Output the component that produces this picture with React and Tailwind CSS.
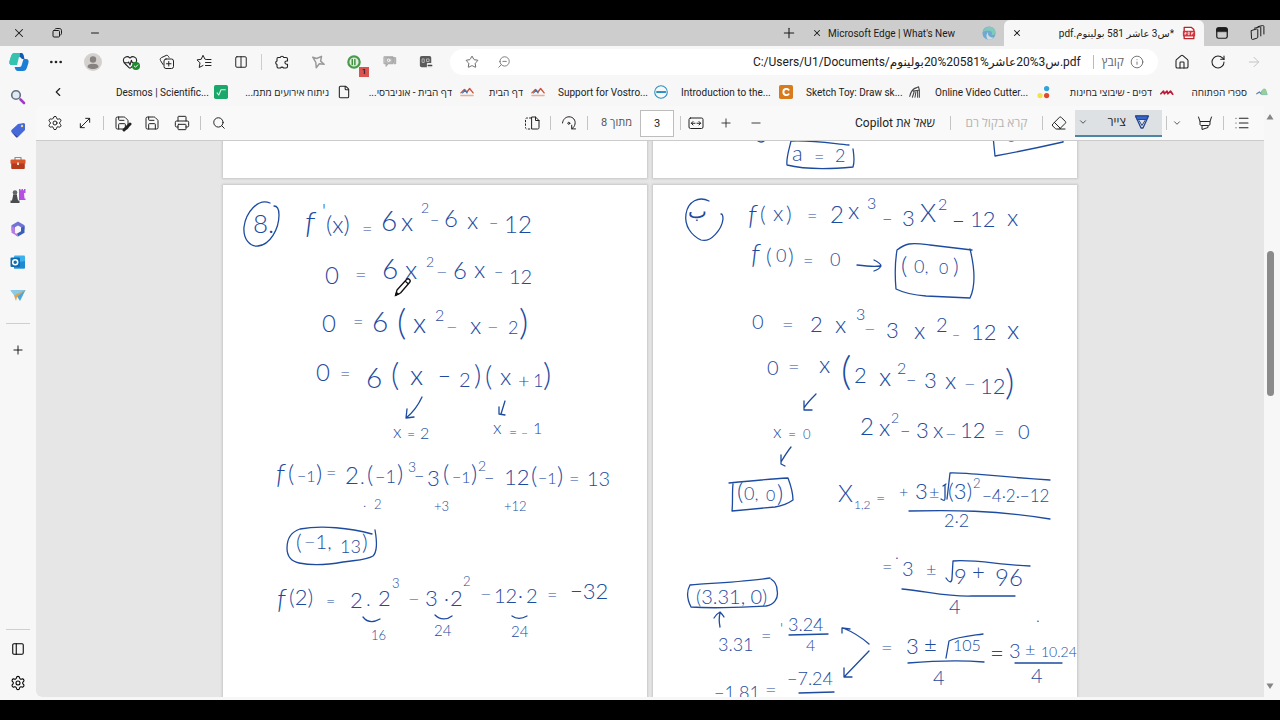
import {
  ArrowLeft, ChevronDown, ChevronLeft, Columns2, Ellipsis, Eraser, File, HeartPulse, House, Info,
  List, Minus, MoveDiagonal, PanelLeft, Plus, Printer, RotateCw, Save, Search, Settings, Star, X, ZoomOut,
} from 'lucide-react'

const UI_FONT = "font-['Roboto','Open_Sans','Noto_Sans','DejaVu_Sans',sans-serif]"

function Glyph({ className = 'size-4', children, box = '0 0 16 16' }) {
  return (
    <svg viewBox={box} className={className} fill="none" stroke="currentColor" strokeLinecap="round" strokeLinejoin="round" aria-hidden="true">
      {children}
    </svg>
  )
}

function IconButton({ label, className = 'w-9', children }) {
  return (
    <button type="button" aria-label={label} className={`flex shrink-0 items-center justify-center ${className}`}>
      {children}
    </button>
  )
}

/* ---- Small drawings ---- */

const CopilotLogo = () => (
  <Glyph className="size-5" box="0 0 20 20">
    <g stroke="none">
      <path d="M6 1h6c2 0 2.300 1.500 3 4H9.500C8 5 7.500 6 7 8l-1.500 5H3C.5 13 0 11 .6 9L2 4.500C2.700 2 4 1 6 1z" fill="#20a8c9" />
      <path d="M6 1h5L8 13H3C.5 13 0 11 .6 9L2 4.500C2.700 2 4 1 6 1z" fill="#35c3b0" />
      <path d="M14 19H9c-2 0-2.700-1.500-3.400-4h4.900c1.500 0 2-1 2.500-3l1.500-5H17c2.500 0 3 2 2.400 4L18 15.500c-.7 2.500-2 3.500-4 3.500z" fill="#1b7fd6" />
      <path d="M11 1h1c2 0 2.300 1.500 3 4l.5 2H13l-2-2z" fill="#1559b5" />
    </g>
  </Glyph>
)

const EdgeLogo = () => (
  <Glyph className="size-3.5 opacity-70">
    <g stroke="none">
      <circle cx="8" cy="8" r="7.500" fill="#4a9ad0" />
      <path d="M1 7c1-4 4-6.500 8-6.200 4 .3 6.700 3.200 6.500 6.200-.2 2.500-2.500 3.600-4.500 3.200 1-1.700.5-4.200-2.500-4.700C5.500 5 2.500 5.500 1 7z" fill="#62c9b4" />
      <path d="M7 7c-1 3 1 6 6 6-1.500 2-4 2.700-6 2.400C5 14 4 9 7 7z" fill="#cfe2ee" />
    </g>
  </Glyph>
)

const PdfBadge = () => (
  <Glyph className="size-3.5">
    <path d="M2.500 6V1.500h8L13.500 4v2M2.500 12v2.500h11V12" stroke="#b3262b" strokeWidth="1.500" fill="#fff" />
    <rect x="1" y="5.500" width="14" height="6.500" rx="1" fill="#d3333b" stroke="none" />
    <path d="M3.500 10V7.500h1.300v1.200H3.500M7 7.500V10h1.300V7.500zM11 10V7.500h1.800M11 8.700h1.300" stroke="#fff" strokeWidth=".8" />
  </Glyph>
)

const Restore = () => (
  <Glyph className="size-2.5" box="0 0 10 10">
    <rect x="1" y="2.500" width="6.500" height="6.500" rx="1" />
    <path d="M3 1.200c.3-.5.700-.7 1.200-.7h3C8.700.5 9.500 1.300 9.500 2.700v3c0 .6-.3 1-.8 1.200" />
  </Glyph>
)

const Collections = () => (
  <Glyph className="size-4">
    <path d="M4 10.500 1.500 6.500c-.7-1.200-.2-2.200 1-2.900L7 1.500c1-.5 2 0 2.500 1l.5.900" />
    <rect x="5" y="5" width="9.500" height="9.500" rx="2" />
    <path d="M9.750 7.500v4.500M7.500 9.750H12" />
  </Glyph>
)

const Favorites = () => (
  <Glyph className="size-4">
    <path d="M9.500 5.300H9L7 1.300 5.200 5.300 1 5.900l3 3-.8 4.600L7 11.500" />
    <path d="M10.500 5.500H15M9.500 8.500H15M9.500 11.500H15" />
  </Glyph>
)

const Extensions = () => (
  <Glyph className="size-4">
    <path d="M4 3.500h2.200a1.900 1.900 0 0 1 3.600 0H12c.8 0 1.500.7 1.500 1.500v2h-1a1.600 1.600 0 0 0 0 3.200h1V12.500c0 .8-.7 1.500-1.500 1.500H9.500a1.700 1.700 0 0 0-3 0H4.500c-.8 0-1.500-.7-1.500-1.500v-2a1.900 1.900 0 0 1 0-3.600V5c0-.8.300-1.500 1-1.500z" strokeWidth="1.100" />
  </Glyph>
)

const Workspaces = () => (
  <Glyph className="size-4">
    <path d="M1.500 5.500 6.500 4c.8-.2 1.300.2 1.300 1v7c0 .6-.3 1-.9 1.200l-4 1.200c-.8.2-1.400-.2-1.400-1z" />
    <path d="M4.500 3.200 9.500 1.900c.8-.2 1.300.2 1.300 1v8M8 1.600l4.500-1c.8-.2 1.400.2 1.400 1V9" />
  </Glyph>
)

const TabActions = () => (
  <Glyph className="size-3.5">
    <rect x="2" y="2" width="12" height="12" rx="2" strokeWidth="1.400" />
    <path d="M2 6V4c0-1.200.8-2 2-2h8c1.200 0 2 .8 2 2v2z" fill="currentColor" />
  </Glyph>
)

const Highlighter = () => (
  <Glyph className="size-4">
    <path d="M1.500 2l1.500 4.500h10L14.500 2M3 6.500v2.500c0 1 .5 1.500 1.500 1.500h7c1 0 1.500-.5 1.500-1.500V6.500M5 10.500v4l6-2v-2" />
  </Glyph>
)

const DrawPen = () => (
  <Glyph className="size-4">
    <path d="M1.500 2h13L9 14H7z" stroke="#26468f" strokeWidth="1.300" />
    <path d="M2 2h12l-1.500 3.500h-9z" fill="#3566cf" stroke="#26468f" />
    <path d="M5 6.500l3 5 3-5" stroke="#26468f" />
  </Glyph>
)

const FitWidth = () => (
  <Glyph className="size-4">
    <rect x="1" y="3" width="14" height="10.500" rx="1.500" />
    <path d="M3.500 8.250H7M9 8.250h3.500M5 6.500 3.300 8.250 5 10M11 6.500l1.700 1.750L11 10" />
  </Glyph>
)

const Rotate = () => (
  <Glyph className="size-4">
    <path d="M1.500 8C2 4 5 1.800 8 1.800c4.200 0 6.800 3.500 6 7.200-.3 2-1.500 3.500-3 4.700M10.700 10.200v3.700h3.800" />
    <circle cx="7.800" cy="8.300" r="1" />
  </Glyph>
)

const PageView = () => (
  <Glyph className="size-4">
    <path d="M7 3H3C2 3 1.500 3.500 1.500 4.500v8c0 1 .5 1.500 1.500 1.500h4" strokeDasharray="1.500 2" />
    <path d="M8 2h3.500L15 5.500v7c0 1-.5 1.500-1.500 1.500H8zM11.500 2v3.500H15" />
  </Glyph>
)

const SaveAs = () => (
  <span className="relative">
    <Save className="size-4" strokeWidth={1.5} />
    <Glyph className="absolute -right-0.5 -bottom-px size-2.5" box="0 0 10 10">
      <path d="M2 8l6-6" stroke="#222" strokeWidth="3" />
    </Glyph>
  </span>
)

/* ---- Sidebar apps ---- */

const SIDEBAR = [
  { label: 'חיפוש', art: (
    <><circle cx="6" cy="6" r="4.300" fill="#dcebf5" stroke="#65707c" strokeWidth="1.600" /><path d="M10.500 10.500l3.500 3.500" stroke="#a13bc4" strokeWidth="2.600" /></>
  ) },
  { label: 'קניות', art: (
    <g stroke="none"><path d="M8 2l6-1 1 1v6l-7 7c-1 .5-1.500.5-2 0L1.500 10c-.5-.7-.5-1.200 0-2z" fill="#4668d8" /><path d="M1.500 10L8 15c-1 .5-1.500.5-2 0z" fill="#2f3f9b" /><circle cx="12" cy="4" r="1.200" fill="#f5d67a" /></g>
  ) },
  { label: 'כלים', art: (
    <g stroke="none"><path d="M5 5V2.500h6V5" stroke="#8a8f94" strokeWidth="1.200" /><rect x=".5" y="4.500" width="15" height="4.500" rx="1" fill="#d9552a" /><rect x="1.200" y="8.500" width="13.600" height="5.500" rx="1" fill="#b43c1c" /><rect x="7" y="7.500" width="2" height="2.500" fill="#f3d9c9" /></g>
  ) },
  { label: 'משחקים', art: (
    <g stroke="none"><path d="M9 1h1.500v1.200h1V1H13v1.200h1V1h1.500v4H14l.5 5.500h1V12H9V5z" fill="#b44fdf" /><circle cx="5" cy="4.500" r="2.300" fill="#63676b" /><path d="M3 6.500h4V8l1 4.500h1.500V15H.5v-2.500H2L3 8z" fill="#4a4d50" /></g>
  ) },
  { label: 'Microsoft 365', art: (
    <g stroke="none"><path d="M8 .5l6.500 3.700v4L11 10V6.300L8 4.600 5 6.300v5.200L1.500 9.500V4.300z" fill="#6f73d8" /><path d="M14.500 5v6.700L8 15.500l-3-1.700 6-3.500V7z" fill="#3b5fb8" /><path d="M1.500 5L5 7v5l3 1.500v2l-6.500-3.800z" fill="#b77de0" /><circle cx="8" cy="8" r="2.300" fill="#f7f7f7" /></g>
  ) },
  { label: 'Outlook', art: (
    <g stroke="none"><rect x="4" y="1.500" width="11" height="13" rx="1" fill="#3cb0ea" /><path d="M4 9l11-2v6.500c0 .6-.4 1-1 1H4z" fill="#1f8ad2" /><rect x=".5" y="3.500" width="9.500" height="9.500" rx="1" fill="#0f6cb0" /><circle cx="5.200" cy="8.200" r="2.500" stroke="#fff" strokeWidth="1.500" /></g>
  ) },
  { label: 'Drop', art: (
    <g stroke="none"><path d="M.5 3.500L15.500 3 10 14 7.500 10z" fill="#4aa6dc" /><path d="M.5 3.500L15.500 3 4.500 9z" fill="#8ccbe8" /><path d="M4 8.500L15.500 3 7 10l-1 4z" fill="#e0a44a" /></g>
  ) },
]

function Sidebar() {
  return (
    <nav aria-label="סרגל צד" className="flex w-9 shrink-0 flex-col items-center">
      <div className="flex flex-col pt-0.5">
        {SIDEBAR.map(({ label, art }) => (
          <IconButton key={label} label={label} className="h-[33px] w-9">
            <Glyph className="size-4">{art}</Glyph>
          </IconButton>
        ))}
      </div>
      <hr className="mt-3 w-6 border-[#cfcfcf]" />
      <IconButton label="הוספה" className="mt-3 h-7 w-9"><Plus className="size-3.5" strokeWidth={1.5} /></IconButton>
      <div className="mt-auto flex flex-col items-center">
        <hr className="w-6 border-[#cfcfcf]" />
        <IconButton label="הצמדה" className="mt-0.5 h-[33px] w-9"><PanelLeft className="size-3.5" strokeWidth={1.8} /></IconButton>
        <IconButton label="הגדרות" className="h-[35px] w-9"><Settings className="size-4" strokeWidth={1.6} /></IconButton>
      </div>
    </nav>
  )
}

/* ---- Browser chrome ---- */

function TitleBar() {
  return (
    <header className="flex h-[26px] shrink-0 items-stretch bg-[#cdcdcd] pr-1 text-[10px] text-[#1b1b1b]">
      <IconButton label="סביבות עבודה"><Workspaces /></IconButton>
      <IconButton label="כרטיסיות"><TabActions /></IconButton>
      <div className="flex w-[200px] items-center gap-2 rounded-t-md bg-[#f7f7f7] pr-2 pl-2">
        <PdfBadge />
        <span className="min-w-0 flex-1 truncate">*س3 عاشر 581 بولينوم.pdf</span>
        <IconButton label="סגור כרטיסייה" className="w-2.5"><X className="size-2.5" strokeWidth={2.5} /></IconButton>
      </div>
      <div className="flex w-[200px] items-center gap-1.5 pr-2 pl-2">
        <EdgeLogo />
        <span dir="ltr" className="min-w-0 flex-1 truncate">Microsoft Edge | What's New</span>
        <IconButton label="סגור כרטיסייה" className="w-2.5"><X className="size-2.5" strokeWidth={2.5} /></IconButton>
      </div>
      <IconButton label="כרטיסייה חדשה" className="w-[30px]"><Plus className="size-4" strokeWidth={1.6} /></IconButton>
      <div className="flex-1" />
      <IconButton label="מזער" className="w-[38px]"><Minus className="size-3" strokeWidth={2} /></IconButton>
      <IconButton label="שחזר" className="w-[38px]"><Restore /></IconButton>
      <IconButton label="סגור" className="w-[38px]"><X className="size-3.5" strokeWidth={1.8} /></IconButton>
    </header>
  )
}

function AddressRow() {
  return (
    <div className="flex h-8 shrink-0 items-stretch pr-2 text-[#222]">
      <IconButton label="קדימה"><ArrowLeft className="size-4 -scale-x-100 text-[#c4c4c4]" strokeWidth={1.5} /></IconButton>
      <IconButton label="רענן"><RotateCw className="size-4" strokeWidth={1.6} /></IconButton>
      <IconButton label="דף הבית"><House className="size-4" strokeWidth={1.6} /></IconButton>
      <div className="mx-1.5 my-[3px] flex min-w-0 flex-1 items-center rounded-full bg-white pr-3.5 pl-3">
        <Info className="size-3.5 text-[#666]" strokeWidth={1.5} />
        <label htmlFor="url" className="mr-1.5 text-xs text-[#666]">קובץ</label>
        <span className="mr-2 ml-3 h-3.5 w-px bg-[#bbb]" />
        <input id="url" dir="ltr" className="min-w-0 flex-1 bg-transparent text-right text-xs text-[#1b1b1b] outline-none" defaultValue="C:/Users/U1/Documents/س3%20عاشر%20581%20بولينوم.pdf" />
        <IconButton label="הקטנה" className="w-5"><ZoomOut className="size-3.5 -scale-x-100 text-[#777]" strokeWidth={1.6} /></IconButton>
        <IconButton label="הוסף למועדפים" className="mr-3 w-5"><Star className="size-3.5 text-[#555]" strokeWidth={1.5} /></IconButton>
      </div>
      <IconButton label="הרחבת הקלטה">
        <Glyph className="size-3.5 opacity-90">
          <g stroke="none"><rect x="1" y="1" width="13" height="13" rx="2" fill="#4a4a4a" /><path d="M4 4.500h2v4H4zM9 4.500h2.500v3H9z" stroke="#b5b5b5" /><rect x="9" y="9" width="7" height="6" rx="1" fill="#f0f0f0" /><path d="M10.500 12h4" stroke="#333" strokeWidth="1.500" /></g>
        </Glyph>
      </IconButton>
      <IconButton label="הרחבת צ'אט">
        <Glyph className="size-3.5"><path d="M5 3h9.500v7H13M1.500 2h10v8H6l-2.500 3v-3h-2z" fill="#b5b5b5" stroke="#a3a3a3" /><circle cx="6.500" cy="6" r="1.500" stroke="#fff" /></Glyph>
      </IconButton>
      <IconButton label="הרחבה ירוקה">
        <span className="relative">
          <Glyph className="size-3.5"><circle cx="8" cy="8" r="6.500" stroke="#4a9a4c" strokeWidth="2.500" fill="#dff0df" /><path d="M6 5v6M9 5v6" stroke="#3c8a3e" strokeWidth="1.600" /></Glyph>
          <span className="absolute -right-2 -bottom-2 flex size-2.5 items-center justify-center bg-[#d9534f] text-[8px] leading-none text-black">1</span>
        </span>
      </IconButton>
      <IconButton label="הרחבת כוכב">
        <Glyph className="size-3.5"><path d="M2 2.500l4.500 1.500L12 1.500 11 7l4 3.500-5.500-.5L6 14.500 5.500 8.500z" stroke="#9a9a9a" strokeWidth="1.700" /></Glyph>
      </IconButton>
      <IconButton label="הרחבות"><Extensions /></IconButton>
      <span className="mx-0.5 h-4 w-px self-center bg-[#ccc]" />
      <IconButton label="מסך מפוצל" className="w-[37px]"><Columns2 className="size-3.5" strokeWidth={1.7} /></IconButton>
      <IconButton label="מועדפים" className="w-[37px]"><Favorites /></IconButton>
      <IconButton label="אוספים" className="w-[37px]"><Collections /></IconButton>
      <IconButton label="ביצועים" className="w-[37px]">
        <span className="relative">
          <HeartPulse className="size-4" strokeWidth={1.6} />
          <Glyph className="absolute -right-0.5 bottom-0 size-2" box="0 0 8 8"><circle cx="4" cy="4" r="4" fill="#1d8a2c" stroke="none" /><path d="M2.300 4l1.200 1.200 2.200-2.300" stroke="#fff" /></Glyph>
        </span>
      </IconButton>
      <IconButton label="פרופיל" className="w-[37px]">
        <Glyph className="size-[18px]" box="0 0 18 18"><g stroke="none"><circle cx="9" cy="9" r="9" fill="#d4d0cd" /><circle cx="9" cy="6.500" r="3.200" fill="#86827f" /><path d="M3.500 14c0-2.500 2-3.200 5.500-3.200s5.500.7 5.500 3.200c-3 2.700-8 2.700-11 0z" fill="#86827f" /></g></Glyph>
      </IconButton>
      <IconButton label="עוד" className="w-[37px]"><Ellipsis className="size-4" strokeWidth={2} /></IconButton>
      <IconButton label="Copilot" className="w-[37px]"><CopilotLogo /></IconButton>
    </div>
  )
}

const HomeIcon = (
  <><path d="M1 9l4-4 3 3 3-4 4 5" stroke="#c9503a" strokeWidth="1.500" /><path d="M3 9l3-3 2 3" stroke="#3a78b5" strokeWidth="1.500" /><path d="M1 12h14" stroke="#e8b08e" strokeWidth="1.500" /></>
)

const BOOKMARKS = [
  { id: 'books', text: 'ספרי הפתוחה', width: 'w-[60px]', rtl: true, icon: (
    <><path d="M2 10l3-2 2 2 1-2" stroke="#5b88a8" strokeWidth="1.500" /><path d="M7 9c1-4 3-5 5-4l2 6H8z" fill="#9fd08a" stroke="#7fc0b0" /></>
  ) },
  { id: 'pages', text: 'דפים - שיבוצי בחינות', width: 'w-[88px]', rtl: true, icon: <path d="M1 10l3-3 1 3 3-3 1 3 3-3 2.500 3.500" stroke="#b8203a" strokeWidth="2" /> },
  { id: 'video', text: 'Online Video Cutter...', width: 'w-[94px]', icon: (
    <g stroke="none"><circle cx="11" cy="4" r="3" fill="#2ea3dc" /><circle cx="11" cy="12" r="3" fill="#e0492f" /><circle cx="3.500" cy="12" r="3" fill="#f3e04a" /></g>
  ) },
  { id: 'sketch', text: 'Sketch Toy: Draw sk...', width: 'w-[94px]', icon: <path d="M2 13c1-5 4-9 8-10l2-1 1 4v8M5 14l2-6M8 14l1-6M11 14V7M6 7l6-1" stroke="#444" strokeWidth="1.200" /> },
  { id: 'intro', text: 'Introduction to the...', width: 'w-[90px]', icon: (
    <><rect width="16" height="16" rx="2" fill="#d97a1c" stroke="none" /><path d="M11 5.500C9.500 3.800 5 4 5 8s4.500 4.200 6 2.500" stroke="#fff" strokeWidth="2.200" /></>
  ) },
  { id: 'dell', text: 'Support for Vostro...', width: 'w-[88px]', icon: (
    <><circle cx="8" cy="8" r="7.200" stroke="#2a8fc0" strokeWidth="1.200" /><path d="M3.500 8h1.500M6.500 8H8M9.500 8h1M12 8h.8" stroke="#2a8fc0" strokeWidth="2.400" /></>
  ) },
  { id: 'home', text: 'דף הבית', width: 'w-9', rtl: true, icon: HomeIcon },
  { id: 'university', text: 'דף הבית - אוניברסי...', width: 'w-[88px]', rtl: true, icon: HomeIcon },
  { id: 'events', text: 'ניתוח אירועים מתמ...', width: 'w-[88px]', rtl: true, icon: null },
  { id: 'desmos', text: 'Desmos | Scientific...', width: 'w-[90px]', icon: (
    <><rect width="16" height="16" rx="2" fill="#19a869" stroke="none" /><path d="M3.500 9l2 2.500L8 5.500h5" stroke="#d6f5e6" strokeWidth="1.200" /></>
  ) },
]

function BookmarksRow() {
  return (
    <div className="flex h-7 shrink-0 items-center pr-[11px] text-[10px] text-[#222]">
      <div className="flex items-center gap-[13px]">
        {BOOKMARKS.map(({ id, text, width, rtl, icon }) => (
          <a key={id} href="#" className="flex items-center gap-2 whitespace-nowrap">
            {icon ? <Glyph className="size-3.5 shrink-0">{icon}</Glyph> : <File className="size-3.5 shrink-0" strokeWidth={1.8} />}
            <span dir={rtl ? 'rtl' : 'ltr'} className={`flex justify-start ${width}`}>{text}</span>
          </a>
        ))}
      </div>
      <IconButton label="מועדפים נוספים" className="mr-auto ml-1 w-9"><ChevronLeft className="size-3.5" strokeWidth={2} /></IconButton>
    </div>
  )
}

/* ---- PDF viewer ---- */

const Divider = () => <span className="h-3.5 w-px shrink-0 bg-[#c4c4c4]" />

function PdfToolbar() {
  return (
    <div className="flex h-[35px] shrink-0 items-center border-b border-[#cbcbcb] bg-[#f9f9f9] pr-1 text-xs text-[#222]">
      <IconButton label="תוכן עניינים"><List className="size-4" strokeWidth={1.6} /></IconButton>
      <Divider />
      <IconButton label="סימון"><Highlighter /></IconButton>
      <IconButton label="אפשרויות סימון" className="w-5"><ChevronDown className="size-2.5" strokeWidth={1.8} /></IconButton>
      <Divider />
      <div className="mr-1 flex h-[27px] w-[87px] items-center border-b-2 border-[#4b87a5] bg-[#dde1e4]">
        <button type="button" className="flex flex-1 items-center gap-2 pr-3"><DrawPen />צייר</button>
        <IconButton label="אפשרויות ציור" className="w-4"><ChevronDown className="size-2.5" strokeWidth={1.8} /></IconButton>
      </div>
      <IconButton label="מחק" className="w-8"><Eraser className="size-4" strokeWidth={1.5} /></IconButton>
      <Divider />
      <button type="button" disabled className="w-[91px] text-center whitespace-nowrap text-[#b4b4b4]">קרא בקול רם</button>
      <Divider />
      <button type="button" className="w-[110px] text-center whitespace-nowrap">שאל את Copilot</button>

      <IconButton label="הקטן" className="mr-[69px] w-[30px]"><Minus className="size-3.5" strokeWidth={1.5} /></IconButton>
      <IconButton label="הגדל" className="w-[30px]"><Plus className="size-3.5" strokeWidth={1.5} /></IconButton>
      <IconButton label="התאם לרוחב" className="w-[30px]"><FitWidth /></IconButton>
      <Divider />
      <input id="page" dir="ltr" aria-label="מספר עמוד" className="mr-1.5 h-[27px] w-[34px] border border-[#bdbdbd] bg-white text-center text-[11px]" defaultValue="3" />
      <label htmlFor="page" className="mx-2 w-9 text-[11px] whitespace-nowrap text-[#555]">מתוך 8</label>
      <Divider />
      <IconButton label="סובב"><Rotate /></IconButton>
      <Divider />
      <IconButton label="תצוגת עמוד"><PageView /></IconButton>

      <div className="mr-auto flex items-center pl-[7px]">
        <IconButton label="חיפוש"><Search className="size-3.5" strokeWidth={1.7} /></IconButton>
        <Divider />
        <IconButton label="הדפס"><Printer className="size-4" strokeWidth={1.5} /></IconButton>
        <IconButton label="שמור" className="w-6"><Save className="size-4" strokeWidth={1.5} /></IconButton>
        <IconButton label="שמור בשם"><SaveAs /></IconButton>
        <Divider />
        <IconButton label="מסך מלא"><MoveDiagonal className="size-4" strokeWidth={1.5} /></IconButton>
        <IconButton label="הגדרות" className="w-6"><Settings className="size-4" strokeWidth={1.5} /></IconButton>
      </div>
    </div>
  )
}

/* Ink notes: [x, baseline, size, text] */
const DERIVATIVE_NOTES = [
  [253, 233, 26, '8.'],
  [305, 234, 32, 'f'], [322, 218, 20, '\''], [326, 233, 24, '(x)'], [362, 235, 18, '='], [381, 231, 28, '6'], [401, 231, 26, 'x'], [421, 213, 14, '2'], [430, 226, 16, '−'],
  [444, 227, 24, '6'], [467, 229, 24, 'x'], [489, 229, 16, '−'], [504, 233, 24, '12'],
  [325, 284, 24, '0'], [355, 282, 20, '='], [382, 279, 28, '6'], [405, 279, 26, 'x'], [426, 267, 14, '2'], [436, 279, 20, '−'],
  [453, 279, 24, '6'], [474, 278, 24, 'x'], [494, 278, 16, '−'], [509, 284, 20, '12'],
  [322, 332, 24, '0'], [353, 328, 18, '='], [372, 332, 28, '6'], [397, 335, 36, '('], [413, 333, 28, 'x'], [435, 321, 16, '2'], [446, 334, 20, '−'],
  [470, 334, 24, 'x'], [487, 334, 20, '−'], [508, 334, 18, '2'], [519, 335, 36, ')'],
  [316, 381, 24, '0'], [340, 380, 18, '='], [366, 388, 28, '6'], [391, 386, 32, '('], [410, 385, 28, 'x'], [438, 384, 22, '−'], [459, 387, 20, '2'],
  [474, 385, 28, ')'], [485, 386, 28, '('], [500, 385, 24, 'x'], [518, 388, 20, '+'], [533, 387, 18, '1'], [543, 386, 32, ')'],
  [393, 438, 18, 'x'], [407, 439, 14, '='], [420, 439, 16, '2'],
  [493, 434, 18, 'x'], [509, 437, 14, '='], [521, 437, 12, '−'], [533, 434, 16, '1'],
  [276, 484, 28, 'f'], [288, 482, 24, '('], [297, 482, 16, '−1'], [316, 482, 24, ')'], [326, 479, 18, '='], [345, 484, 24, '2'], [360, 484, 20, '.'],
  [367, 483, 24, '('], [375, 483, 18, '−1'], [397, 482, 24, ')'], [408, 472, 14, '3'], [414, 482, 18, '−'], [427, 486, 22, '3'],
  [443, 482, 24, '('], [452, 483, 16, '−1'], [471, 482, 24, ')'], [478, 471, 14, '2'], [484, 484, 18, '−'], [504, 485, 22, '12'],
  [531, 484, 24, '('], [538, 484, 16, '−1'], [557, 484, 24, ')'], [569, 485, 18, '='], [587, 486, 20, '13'],
  [363, 507, 14, '.'], [374, 509, 13, '2'], [434, 511, 13, '+3'], [504, 511, 13, '+12'],
  [296, 550, 22, '('], [304, 549, 20, '−1,'], [340, 553, 18, '13'], [362, 550, 22, ')'],
  [277, 609, 28, 'f'], [289, 605, 22, '(2)'], [326, 607, 16, '='], [350, 608, 22, '2'], [366, 606, 20, '.'], [378, 606, 22, '2'], [392, 588, 13, '3'],
  [408, 606, 20, '−'], [425, 606, 22, '3'], [444, 606, 20, '·'], [450, 606, 22, '2'], [463, 586, 13, '2'],
  [480, 601, 20, '−'], [494, 603, 20, '12'], [518, 603, 20, '·'], [526, 603, 20, '2'], [547, 601, 18, '='], [570, 599, 22, '−32'],
  [371, 640, 13, '16'], [434, 636, 15, '24'], [511, 637, 15, '24'],
]

const DERIVATIVE_STROKES = [
  'M270 203C258 198 246 212 244 227c-1 12 6 20 14 19 12-1 21-17 21-31 0-7-2-9-5-9',
  'M422 397C417 408 411 414 406 418M407 409l-1 9 8-1',
  'M505 401l-4 13M499 407l0 7 6 1',
  'M372 534C350 528 322 525 300 529c-9 3-13 10-13 19 0 8 3 13 12 15 14 3 28 2 44-1 14-2 24-2 30-6 4-4 4-15 2-26',
  'M363 617c4 5 10 6 17 2', 'M435 615c5 5 12 5 17 1', 'M512 616c4 3 10 3 15 0',
]

const CUBIC_NOTES = [
  [688, 218, 20, 'ب'],
  [748, 225, 28, 'f'], [760, 222, 22, '('], [773, 221, 22, 'x'], [786, 222, 22, ')'], [807, 222, 18, '='], [830, 223, 24, '2'], [848, 219, 24, 'x'], [867, 209, 16, '3'],
  [882, 225, 18, '−'], [902, 226, 22, '3'], [920, 222, 26, 'X'], [938, 210, 16, '2'], [952, 229, 22, '−'], [970, 227, 22, '12'], [1007, 226, 24, 'x'],
  [751, 264, 28, 'f'], [766, 264, 22, '('], [776, 262, 18, '0'], [788, 264, 22, ')'], [803, 267, 18, '='], [830, 266, 18, '0'],
  [901, 274, 24, '('], [914, 273, 18, '0,'], [939, 274, 16, '0'], [953, 274, 22, ')'],
  [752, 329, 20, '0'], [782, 332, 20, '='], [810, 332, 22, '2'], [835, 333, 24, 'x'], [856, 320, 16, '3'], [864, 336, 20, '−'], [886, 338, 22, '3'],
  [914, 339, 24, 'x'], [936, 332, 20, '2'], [952, 340, 14, '−'], [971, 340, 22, '12'], [1007, 339, 26, 'x'],
  [767, 375, 20, '0'], [788, 374, 20, '='], [819, 373, 24, 'x'], [841, 385, 40, '('], [854, 383, 22, '2'], [879, 386, 26, 'x'], [897, 374, 16, '2'], [906, 386, 18, '−'],
  [924, 388, 22, '3'], [945, 389, 24, 'x'], [964, 391, 20, '−'], [980, 394, 22, '12'], [1005, 395, 36, ')'],
  [773, 438, 18, 'x'], [788, 439, 14, '='], [803, 439, 13, '0'],
  [860, 435, 24, '2'], [879, 436, 24, 'x'], [891, 423, 14, '2'], [900, 437, 18, '−'], [916, 438, 22, '3'], [933, 438, 22, 'x'], [945, 441, 20, '−'],
  [960, 438, 22, '12'], [994, 439, 18, '='], [1018, 439, 20, '0'],
  [737, 500, 24, '('], [744, 500, 18, '0,'], [766, 501, 16, '0'], [777, 502, 24, ')'],
  [838, 502, 24, 'X'], [854, 509, 12, '1,2'], [876, 504, 16, '='], [899, 498, 16, '+'], [915, 499, 22, '3'], [929, 499, 18, '±'], [948, 499, 22, '(3)'], [973, 488, 13, '2'],
  [982, 502, 17, '−4·2·−12'], [944, 527, 18, '2·2'],
  [882, 573, 18, '='], [895, 559, 16, '.'], [902, 576, 20, '3'], [926, 576, 18, '±'], [954, 584, 22, '9'], [972, 580, 22, '+'], [995, 586, 24, '96'], [949, 614, 20, '4'],
  [696, 604, 20, '(3.31, 0)'],
  [718, 651, 18, '3.31'], [761, 642, 18, '='], [780, 634, 16, '\''], [788, 631, 18, '3.24'], [806, 651, 16, '4'],
  [881, 655, 20, '='], [906, 654, 22, '3'], [924, 652, 22, '±'], [953, 651, 16, '105'], [933, 685, 20, '4'],
  [990, 662, 24, '='], [1009, 658, 20, '3'], [1025, 656, 18, '±'], [1041, 657, 14, '10.24'], [1031, 683, 20, '4'], [1036, 622, 16, '.'],
  [714, 699, 18, '−1.81'], [765, 697, 20, '='], [787, 685, 18, '−7.24'],
]

const CUBIC_STROKES = [
  'M709 201c-10-5-21 0-23 13-2 12 6 22 15 26 10 3 21-11 22-21 0-4-1-5-2-5',
  'M857 265c8 1 16 2 23 1M874 260c4 2 7 4 7 6-1 2-4 4-7 5',
  'M972 250L930 245c-8-1-14-2-21-1-5 1-8 3-12 6-2 12-2 28-1 39 8 4 17 6 30 7l44 2c6-13 4-33 0-49',
  'M816 394c-5 5-9 9-12 14M804 401l0 9 8 0',
  'M791 447c-4 5-7 10-10 15M781 455l0 9 4 2',
  'M729 483c20-2 40-4 59-5 3 8 5 15 5 22-7 5-12 6-18 7l-43 4c1-9 0-19 1-27',
  'M941 499c3 2 4 2 4-1V485M943 486l3-2M947 499L950 473c12-1 40 3 100 7', 'M909 511c42-1 86-1 141 8',
  'M946 578c4 6 6 4 6 0l1-17c20-2 48 4 77 5', 'M902 589c24 2 46 8 70 7h43',
  'M690 585c20-2 58-3 80-7M690 585c-4 7-2 16 1 22 28 2 52 0 75-1 8-1 13-8 11-16 0-5-3-9-6-11',
  'M720 627c-1-5-1-10 0-14M714 618c2-3 4-5 6-6 2 2 3 3 4 5',
  'M789 635l39-1', 'M799 693l35-1',
  'M869 644c-8-7-16-12-26-16M842 633l0-5 8 1', 'M869 651l-24 25M844 668l0 9 8 0',
  'M946 658l3-17c8-4 20-5 34-7', 'M908 663c25-2 50-3 76-1', 'M1015 663h47',
]

const PREVIOUS_NOTES = [[792, 161, 22, 'a'], [814, 163, 18, '='], [835, 162, 18, '2']]

const PREVIOUS_STROKES = [
  'M758 141q3 2 6 0', 'M849 145c-20-2-38-5-58-4-2 9-5 17-4 24 20 5 44 4 66 2 2-6 1-11 0-18',
  'M993 136l2 20c22-4 46-9 68-14l0-3', 'M1008 140q3 2 7 0',
]

function PdfPage({ label, x, y, height, notes = [], strokes = [], grow }) {
  return (
    <article aria-label={label} className={`w-[424px] shrink-0 overflow-hidden bg-white shadow-[0_0_2px_1px_#c6c6c6] ${grow ? 'h-full' : ''}`}>
      <svg viewBox={`${x} ${y} 424 ${height}`} className="block w-full fill-[#1d4ba0] font-['Lato','Noto_Sans',sans-serif] font-light">
        <g fill="none" stroke="#1d4ba0" strokeWidth="1.300" strokeLinecap="round" strokeLinejoin="round">
          {strokes.map((d) => <path key={d} d={d} />)}
        </g>
        {notes.map(([nx, ny, size, text]) => (
          <text key={`${nx}-${ny}`} x={nx} y={ny} fontSize={size} fontStyle={text === 'f' ? 'italic' : 'normal'}>{text}</text>
        ))}
      </svg>
    </article>
  )
}

function PenCursor() {
  return (
    <svg viewBox="0 0 18 20" className="absolute top-[136px] left-[358px] h-5 w-[18px]" aria-hidden="true">
      <path d="M1.500 18.500L3 13 12.500 2.500c1-1 2-1 3 0s1 2 0 3L6.500 16z" fill="#fff" stroke="#111" strokeWidth="1.300" strokeLinejoin="round" />
      <path d="M1.500 18.500l1-3 2 1.700zM11 4l3.500 3" stroke="#111" strokeWidth="1.200" fill="#111" />
    </svg>
  )
}

function PdfDocument() {
  return (
    <main dir="ltr" className="relative flex min-h-0 flex-1 flex-col gap-[7px] overflow-hidden rounded-bl-md bg-[#e6e6e6]">
      <div className="flex shrink-0 justify-center gap-1.5">
        <PdfPage label="1" x={223} y={141} height={37} />
        <PdfPage label="2" x={653} y={141} height={37} notes={PREVIOUS_NOTES} strokes={PREVIOUS_STROKES} />
      </div>
      <div className="flex min-h-0 flex-1 justify-center gap-1.5">
        <PdfPage label="3" x={223} y={185} height={512} notes={DERIVATIVE_NOTES} strokes={DERIVATIVE_STROKES} grow />
        <PdfPage label="4" x={653} y={185} height={512} notes={CUBIC_NOTES} strokes={CUBIC_STROKES} grow />
      </div>
      <PenCursor />
    </main>
  )
}

function Scrollbar() {
  return (
    <div className="flex w-3 shrink-0 flex-col items-center py-1.5 text-[#858585]">
      <Glyph className="size-2.5" box="0 0 10 10"><path d="M5 2l3.500 5.500h-7z" fill="currentColor" stroke="none" /></Glyph>
      <div className="flex w-full flex-1 flex-col items-center">
        <div className="h-[23%]" />
        <div className="h-[26%] w-[7px] rounded-full bg-[#8b8b8b]" />
      </div>
      <Glyph className="size-2.5" box="0 0 10 10"><path d="M5 8L1.500 2.500h7z" fill="currentColor" stroke="none" /></Glyph>
    </div>
  )
}

export default function App() {
  return (
    <div dir="rtl" className={`flex h-screen flex-col overflow-hidden bg-black py-5 ${UI_FONT}`}>
      <div className="flex min-h-0 flex-1 flex-col bg-[#f7f7f7]">
        <TitleBar />
        <AddressRow />
        <div className="flex min-h-0 flex-1">
          <div className="flex min-w-0 flex-1 flex-col">
            <BookmarksRow />
            <div className="flex min-h-0 flex-1 pr-1 pb-[3px]">
              <Scrollbar />
              <div className="flex min-w-0 flex-1 flex-col overflow-hidden rounded-l-md">
                <PdfToolbar />
                <PdfDocument />
              </div>
            </div>
          </div>
          <Sidebar />
        </div>
      </div>
    </div>
  )
}
